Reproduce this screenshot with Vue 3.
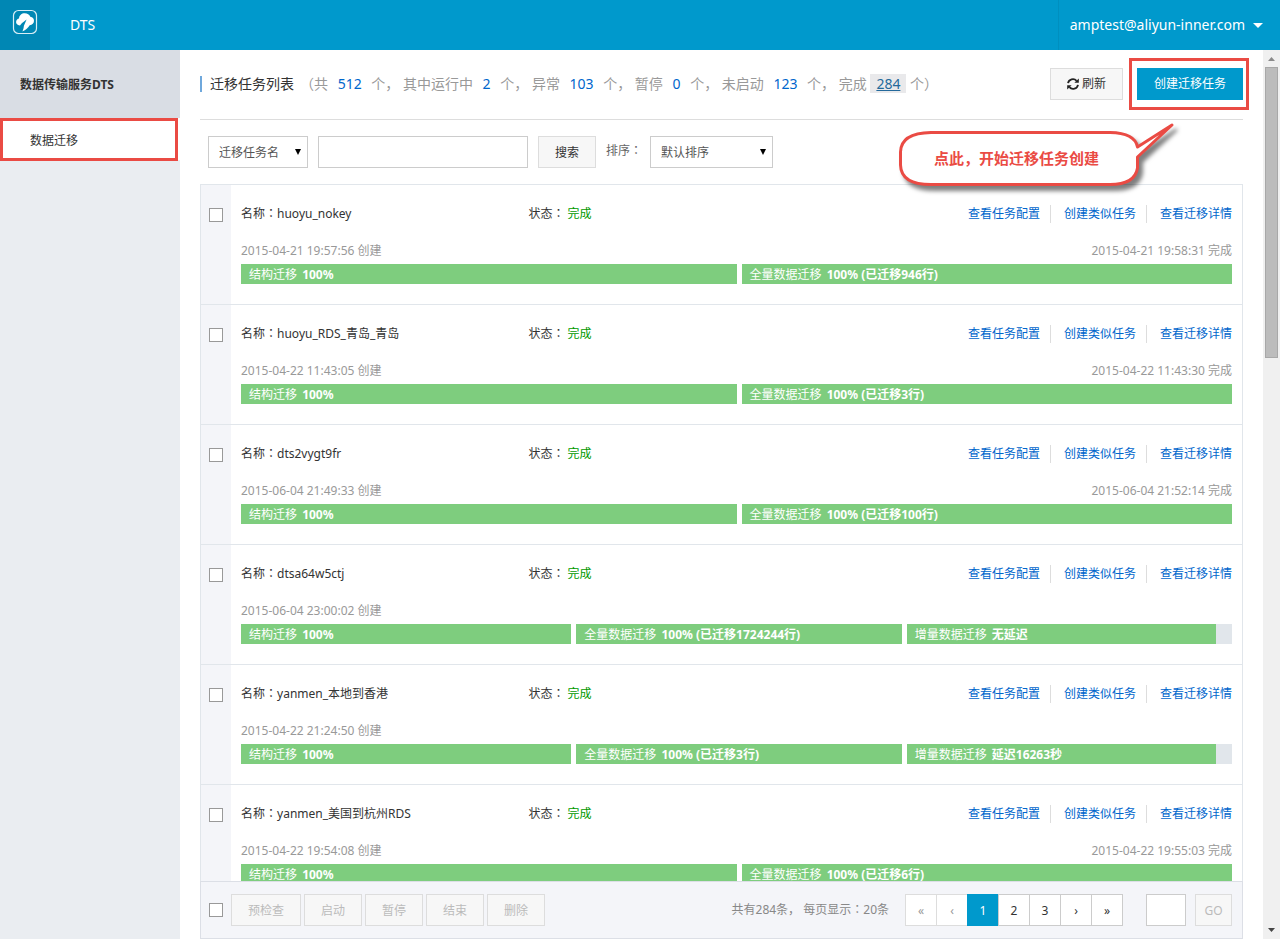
<script setup>
import { ref } from 'vue'

const stats = [
  { label: '共', value: 512, tail: '个， ' },
  { label: '其中运行中', value: 2, tail: '个， ' },
  { label: '异常', value: 103, tail: '个， ' },
  { label: '暂停', value: 0, tail: '个， ' },
  { label: '未启动', value: 123, tail: '个， ' },
  { label: '完成', value: 284, tail: '个', active: true },
]

const structure = { label: '结构迁移', value: '100%', percent: 100 }
const full = (rows) => ({ label: '全量数据迁移', value: `100% (已迁移${rows}行)`, percent: 100 })
const increment = (value) => ({ label: '增量数据迁移', value, percent: 95 })

const tasks = [
  { name: 'huoyu_nokey', created: '2015-04-21 19:57:56', finished: '2015-04-21 19:58:31', steps: [structure, full(946)] },
  { name: 'huoyu_RDS_青岛_青岛', created: '2015-04-22 11:43:05', finished: '2015-04-22 11:43:30', steps: [structure, full(3)] },
  { name: 'dts2vygt9fr', created: '2015-06-04 21:49:33', finished: '2015-06-04 21:52:14', steps: [structure, full(100)] },
  { name: 'dtsa64w5ctj', created: '2015-06-04 23:00:02', finished: '', steps: [structure, full(1724244), increment('无延迟')] },
  { name: 'yanmen_本地到香港', created: '2015-04-22 21:24:50', finished: '', steps: [structure, full(3), increment('延迟16263秒')] },
  { name: 'yanmen_美国到杭州RDS', created: '2015-04-22 19:54:08', finished: '2015-04-22 19:55:03', steps: [structure, full(6)] },
]

const links = ['查看任务配置', '创建类似任务', '查看迁移详情']
const actions = ['预检查', '启动', '暂停', '结束', '删除']
const pages = [
  { text: '«', label: '首页', off: true },
  { text: '‹', label: '上一页', off: true },
  { text: '1', label: '第1页', current: true },
  { text: '2', label: '第2页' },
  { text: '3', label: '第3页' },
  { text: '›', label: '下一页' },
  { text: '»', label: '末页' },
]

const keyword = ref('')
const pageInput = ref('')
</script>

<template>
  <div class="shell">
    <header class="topbar">
      <a class="logo" href="#" aria-label="控制台首页">
        <svg width="26" height="26" viewBox="0 0 26 26" fill="none">
          <rect x="1.5" y="1.5" width="23" height="23" rx="5" stroke="#d9eef6" stroke-width="1.2" />
          <path
            d="M8 16.4 C5.200 16.400 3.700 14.400 4.200 12.300 C4.500 10.700 5.500 9.800 7 9.500 C7.200 6.200 9.600 4.200 12.700 4.200 C15.400 4.200 17.500 5.600 18.300 7.800 C20.600 8.200 22 9.700 22 11.700 C22 14 20.300 16 17.700 16.300 C16.200 18.900 13.800 21 10.400 22.400 C11.300 20.600 11.700 18.800 11.900 16.800 L14.600 10.600 L9.800 14.300 Z"
            fill="#fff"
          />
        </svg>
      </a>
      <span class="product">DTS</span>
      <button class="account" type="button">
        amptest@aliyun-inner.com
        <svg width="10" height="5" viewBox="0 0 10 5"><path d="M0 0H10L5 5Z" fill="#fff" /></svg>
      </button>
    </header>

    <div class="body">
      <nav class="sidebar">
        <h2 class="side-title">数据传输服务DTS</h2>
        <a class="side-item" href="#">数据迁移</a>
      </nav>

      <main class="main">
        <div class="heading">
          <h1 class="title">迁移任务列表</h1>
          <p class="stats">
            （<template v-for="s in stats" :key="s.label"
              >{{ s.label }} <a href="#" class="count" :class="{ active: s.active }">{{ s.value }}</a> {{ s.tail }}</template
            >）
          </p>
          <button class="btn refresh" type="button">
            <svg width="12" height="12" viewBox="0 0 12 12" fill="none" stroke="#222" stroke-width="1.8">
              <path d="M1 5.2 A5 5 0 0 1 9.6 2.8" />
              <path d="M11 6.8 A5 5 0 0 1 2.4 9.2" />
              <path d="M11.8 0.4V4.8H7.4Z" fill="#222" stroke="none" />
              <path d="M0.2 11.6V7.2H4.6Z" fill="#222" stroke="none" />
            </svg>
            刷新
          </button>
          <div class="create-wrap">
            <button class="create" type="button">创建迁移任务</button>
            <div class="callout">
              <svg class="bubble" width="300" height="80" viewBox="0 0 300 80">
                <path
                  d="M33 13.5 H212 Q237 14 239.500 28 L274 6 L239.500 38 V49 Q237 65.500 212 65.500 H33 Q3 65.500 2.500 46 V33 Q3 14 33 13.500 Z"
                  fill="#fff"
                  stroke="#ea4b44"
                  stroke-width="3"
                  stroke-linejoin="round"
                />
              </svg>
              <span class="callout-text">点此，开始迁移任务创建</span>
            </div>
          </div>
        </div>

        <form class="filters" @submit.prevent>
          <select class="field kind" aria-label="搜索字段"><option>迁移任务名</option></select>
          <input v-model="keyword" class="field keyword" type="text" aria-label="关键字" />
          <button class="btn search" type="submit">搜索</button>
          <label class="sort-label" for="sort">排序<span class="colon">：</span></label>
          <select id="sort" class="field sort"><option>默认排序</option></select>
        </form>

        <section class="list">
          <article v-for="t in tasks" :key="t.name" class="task">
            <div class="pick"><input class="check" type="checkbox" :aria-label="t.name" /></div>
            <div class="info">
              <div class="line">
                <span class="name">名称<span class="colon">：</span>{{ t.name }}</span>
                <span class="status">状态<span class="colon">：</span><span class="done">完成</span></span>
                <span class="links">
                  <a v-for="l in links" :key="l" href="#">{{ l }}</a>
                </span>
              </div>
              <div class="times">
                <span>{{ t.created }} 创建</span>
                <span v-if="t.finished">{{ t.finished }} 完成</span>
              </div>
              <div class="steps">
                <div v-for="s in t.steps" :key="s.label" class="step">
                  <div class="track">
                    <div class="fill" :style="{ width: s.percent + '%' }">
                      {{ s.label }} <b>{{ s.value }}</b>
                    </div>
                  </div>
                </div>
              </div>
            </div>
          </article>
        </section>

        <footer class="bottom">
          <input class="check" type="checkbox" aria-label="全选" />
          <div class="actions">
            <button v-for="a in actions" :key="a" class="btn" type="button" disabled>{{ a }}</button>
          </div>
          <span class="total">共有284条， 每页显示<span class="colon">：</span>20条</span>
          <div class="pages">
            <button
              v-for="p in pages"
              :key="p.text"
              class="page"
              :class="{ current: p.current }"
              type="button"
              :aria-label="p.label"
              :disabled="p.off"
            >{{ p.text }}</button>
          </div>
          <input v-model="pageInput" class="field jump" type="text" aria-label="页码" />
          <button class="btn go" type="button" disabled>GO</button>
        </footer>
      </main>

      <div class="scrollbar" aria-hidden="true">
        <svg width="7" height="4" viewBox="0 0 7 4"><path d="M0 4H7L3.500 0Z" fill="#8a8a8a" /></svg>
        <div class="rail"><div class="thumb"></div></div>
        <svg width="7" height="4" viewBox="0 0 7 4"><path d="M0 0H7L3.500 4Z" fill="#444" /></svg>
      </div>
    </div>
  </div>
</template>

<style>
body {
  margin: 0;
}
</style>

<style scoped>
* {
  box-sizing: border-box;
}
.shell {
  display: flex;
  flex-direction: column;
  height: 100vh;
  font: 12px/18px "Noto Sans", "Noto Sans CJK SC", sans-serif;
  color: #333;
  background: #fff;
}
button,
input,
select {
  margin: 0;
  font: inherit;
  color: inherit;
}
a {
  color: #06c;
  text-decoration: none;
}
.colon {
  font-family: "Noto Sans CJK TC", sans-serif;
  line-height: 1;
}
.topbar {
  display: flex;
  flex: none;
  height: 50px;
  background: #09c;
  color: #fff;
}
.logo {
  width: 50px;
  padding: 9px 0 0 12px;
  background: #0087b4;
}
.product {
  flex: 1;
  padding-left: 20px;
  font-size: 14px;
  line-height: 50px;
}
.account {
  display: flex;
  align-items: center;
  gap: 8px;
  padding: 0 17px 0 11px;
  border: 0;
  border-left: 1px solid #008fbf;
  background: none;
  font-size: 14px;
}
.body {
  display: flex;
  flex: 1;
  min-height: 0;
}
.sidebar {
  flex: none;
  width: 180px;
  background: linear-gradient(#fff, #fff) 0 68px / 100% 42px no-repeat #eaedf1;
}
.side-title {
  margin: 0;
  padding-left: 20px;
  font-size: 12px;
  line-height: 70px;
  height: 68px;
  background: #d9dde4;
}
.side-item {
  display: block;
  height: 43px;
  margin-right: 2px;
  padding-left: 27px;
  border: 3px solid #ea4b44;
  background: #fff;
  color: #333;
  line-height: 39px;
}
.main {
  display: flex;
  flex: 1;
  flex-direction: column;
  min-width: 0;
  padding: 0 20px;
}
.heading {
  display: flex;
  flex: none;
  align-items: center;
  height: 70px;
  padding-bottom: 2px;
  border-bottom: 1px solid #ddd;
}
.title {
  margin: 0 6px 0 0;
  padding-left: 8px;
  border-left: 2px solid #6fa8dc;
  font-size: 14px;
  font-weight: 400;
  line-height: 16px;
}
.stats {
  flex: 1;
  margin: 0;
  font-size: 14px;
  line-height: 19px;
  color: #999;
  white-space: nowrap;
}
.count {
  padding: 0 6px;
}
.count.active {
  display: inline-block;
  background: #e9e9eb;
  color: #24699b;
  text-decoration: underline;
}
.btn {
  height: 32px;
  padding: 1px 16px 0;
  border: 1px solid #ddd;
  background: #f7f7f7;
  white-space: nowrap;
}
.btn:disabled {
  color: #bbb;
}
.refresh {
  display: flex;
  align-items: center;
  gap: 3px;
}
.create-wrap {
  position: relative;
  margin: 0 -6px 0 6px;
  padding: 7px 3px 7px 5px;
  border: 3px solid #ea4b44;
}
.create {
  display: block;
  height: 32px;
  padding: 1px 17px 0;
  border: 0;
  background: #09c;
  color: #fff;
}
.callout {
  position: absolute;
  top: 58px;
  right: 48px;
  width: 300px;
  height: 80px;
}
.bubble {
  filter: drop-shadow(4px 5px 2px rgba(0, 0, 0, 0.5));
}
.callout-text {
  position: absolute;
  top: 29px;
  left: 36px;
  color: #ea4b44;
  font-size: 15px;
  font-weight: 700;
  line-height: 20px;
  white-space: nowrap;
}
.filters {
  display: flex;
  flex: none;
  gap: 10px;
  padding: 16px 8px;
}
.field {
  height: 32px;
  border: 1px solid #ccc;
  border-radius: 0;
  background: #fff;
}
select.field {
  padding: 1px 10px 0;
  appearance: none;
  color: #555;
  background: #fff url("data:image/svg+xml,%3Csvg xmlns='http://www.w3.org/2000/svg' width='6' height='6'%3E%3Cpath d='M0 0H6L3 6Z'/%3E%3C/svg%3E") no-repeat right 6px center;
}
.kind {
  width: 100px;
}
.keyword {
  width: 210px;
}
.sort-label {
  margin-right: -2px;
  line-height: 30px;
  color: #666;
}
.sort {
  width: 123px;
}
.list {
  flex: 1;
  min-height: 0;
  overflow: hidden;
  border: 1px solid #e1e6eb;
  border-bottom: 0;
}
.task {
  display: flex;
  height: 120px;
  border-bottom: 1px solid #e1e6eb;
}
.pick {
  flex: none;
  width: 30px;
  padding: 23px 0 0 8px;
  background: #f4f5f9;
}
.check {
  display: block;
  flex: none;
  width: 14px;
  height: 14px;
  appearance: none;
  border: 1px solid #999;
  background: #fff;
}
.info {
  flex: 1;
  min-width: 0;
  padding: 20px 10px 0;
}
.line {
  display: flex;
  height: 18px;
}
.name {
  width: 29%;
}
.done {
  margin-left: 3px;
  color: #090;
}
.links {
  display: flex;
  margin-left: auto;
}
.links a + a {
  margin-left: 10px;
  padding-left: 13px;
  border-left: 1px solid #ddd;
}
.times {
  display: flex;
  justify-content: space-between;
  height: 18px;
  margin-top: 19px;
  color: #999;
}
.steps {
  display: grid;
  grid-auto-flow: column;
  grid-auto-columns: minmax(0, 1fr);
  margin-top: 4px;
}
.step + .step {
  padding-left: 5px;
}
.track {
  background: #e1e6eb;
}
.fill {
  height: 20px;
  padding-left: 8px;
  background: #7ecd7e;
  color: #fff;
  line-height: 21px;
  white-space: nowrap;
}
.fill b {
  margin-left: 2px;
}
.bottom {
  display: flex;
  flex: none;
  align-items: center;
  height: 58px;
  padding: 0 10px 0 8px;
  border: 1px solid #dcdfe6;
  background: #f4f5f9;
}
.actions {
  display: flex;
  gap: 3px;
  margin-left: 8px;
}
.total {
  margin-left: auto;
  color: #888;
}
.pages {
  display: flex;
  margin: 0 24px 0 16px;
}
.page {
  width: 32px;
  height: 32px;
  margin-right: -1px;
  padding: 2px 0 0;
  border: 1px solid #ccc;
  background: #fff;
}
.page:disabled {
  border-color: #ddd;
  color: #999;
}
.page.current {
  border-color: #09c;
  background: #09c;
  color: #fff;
}
.jump {
  width: 40px;
  margin-right: 9px;
}
.go {
  width: 37px;
  padding: 1px 0 0;
}
.scrollbar {
  display: flex;
  flex: none;
  flex-direction: column;
  align-items: center;
  width: 17px;
  padding: 7px 0;
  background: #f0f0f0;
}
.rail {
  flex: 1;
  width: 13px;
  margin: 6px 0;
}
.thumb {
  height: 34%;
  border: 1px solid #a8a8a8;
  background: #bcbcbc;
}
</style>
